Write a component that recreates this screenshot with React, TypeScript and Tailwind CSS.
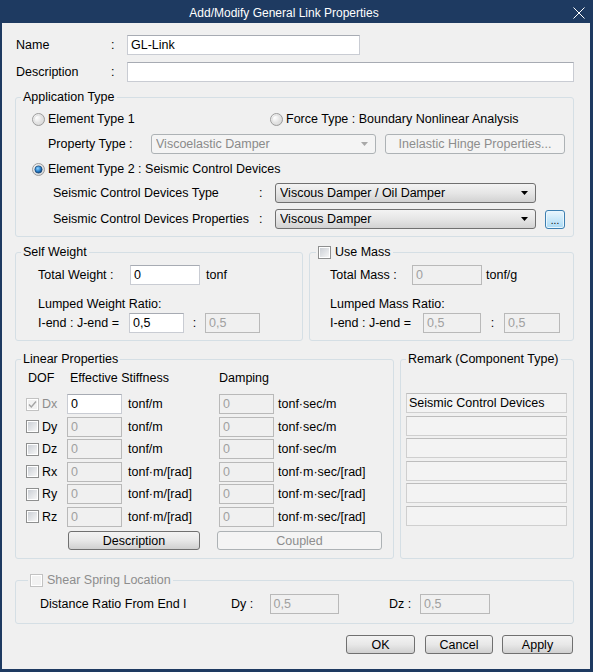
import type { ReactNode } from 'react';

interface BoxProps {
  value?: string;
  disabled?: boolean;
  className?: string;
}

function Box({ value = '', disabled = false, className = '' }: BoxProps) {
  return (
    <div
      className={`h-[20px] shrink-0 border pl-[3px] pt-[1px] leading-[16px] ${
        disabled
          ? 'border-[#b9b9b9] bg-[#f0f0f0] text-[#a0a0a0]'
          : 'border-[#c9ccd3] border-t-[#a7abb3] bg-white text-black'
      } ${className}`}
    >
      {value}
    </div>
  );
}

function Combo({ value, disabled = false, className = '' }: BoxProps) {
  return (
    <div
      className={`h-[20px] shrink-0 rounded-[3px] border flex items-center pl-[4px] pr-[7px] ${
        disabled
          ? 'border-[#adb2b5] bg-[#f4f4f4] text-[#8a8a8a]'
          : 'border-[#707070] bg-linear-to-b from-[#f3f3f3] via-[#e6e6e6] to-[#d2d2d2] text-black'
      } ${className}`}
    >
      <span className="flex-1 truncate">{value}</span>
      <svg width="7" height="4" viewBox="0 0 7 4">
        <path d="M0 0H7L3.5 4Z" fill={disabled ? '#a8a8a8' : '#000'} />
      </svg>
    </div>
  );
}

interface BtnProps {
  label: string;
  disabled?: boolean;
  className?: string;
}

function Btn({ label, disabled = false, className = '' }: BtnProps) {
  return (
    <button
      type="button"
      className={`h-[19px] shrink-0 rounded-[3px] border flex items-center justify-center leading-[16px] ${
        disabled
          ? 'border-[#adb2b5] bg-[#f4f4f4] text-[#8d8d8d]'
          : 'border-[#707070] bg-linear-to-b from-[#f3f3f3] via-[#e8e8e8] to-[#d0d0d0] text-black'
      } ${className}`}
    >
      {label}
    </button>
  );
}

function Radio({ checked = false }: { checked?: boolean }) {
  return (
    <svg width="13" height="13" viewBox="0 0 13 13" className="shrink-0">
      <defs>
        <radialGradient id="rdo-fill" cx="0.35" cy="0.35" r="0.7">
          <stop offset="0" stopColor="#ffffff" />
          <stop offset="1" stopColor="#d2d2d2" />
        </radialGradient>
        <radialGradient id="rdo-dot" cx="0.4" cy="0.35" r="0.65">
          <stop offset="0" stopColor="#8fd3ff" />
          <stop offset="0.6" stopColor="#2b83cf" />
          <stop offset="1" stopColor="#0d3f75" />
        </radialGradient>
      </defs>
      <circle cx="6.5" cy="6.5" r="6" fill="url(#rdo-fill)" stroke="#9c9c9c" />
      <circle cx="6.5" cy="6.5" r="4.3" fill="none" stroke="#e2e2e2" />
      {checked && <circle cx="6.5" cy="6.5" r="3.6" fill="url(#rdo-dot)" stroke="#1b4a7a" strokeWidth="0.8" />}
    </svg>
  );
}

function Check({ checked = false, disabled = false }: { checked?: boolean; disabled?: boolean }) {
  return (
    <svg width="13" height="13" viewBox="0 0 13 13" className="shrink-0">
      <defs>
        <linearGradient id="chk-fill" x1="0" y1="0" x2="1" y2="1">
          <stop offset="0" stopColor="#cbcfd5" />
          <stop offset="1" stopColor="#f6f6f6" />
        </linearGradient>
      </defs>
      <rect x="0.5" y="0.5" width="12" height="12" fill="#fff" stroke={disabled ? '#c2c2c2' : '#8e8f8f'} />
      <rect x="2" y="2" width="9" height="9" fill={disabled ? '#f2f2f2' : 'url(#chk-fill)'} />
      {checked && (
        <path d="M3 6.5L5.3 9L10 3.5" fill="none" stroke={disabled ? '#a4a4a4' : '#333'} strokeWidth="1.4" />
      )}
    </svg>
  );
}

interface GroupProps {
  legend: ReactNode;
  className?: string;
  legendClass?: string;
  children: ReactNode;
}

function Group({ legend, className = '', legendClass = 'ml-[5px]', children }: GroupProps) {
  return (
    <fieldset className={`border border-[#d5dfe5] rounded-[3px] ${className}`}>
      <legend className={`px-[2px] leading-[14px] ${legendClass}`}>{legend}</legend>
      {children}
    </fieldset>
  );
}

const dofRows = [
  { dof: 'Dx', stiff: 'tonf/m', damp: 'tonf·sec/m' },
  { dof: 'Dy', stiff: 'tonf/m', damp: 'tonf·sec/m' },
  { dof: 'Dz', stiff: 'tonf/m', damp: 'tonf·sec/m' },
  { dof: 'Rx', stiff: 'tonf·m/[rad]', damp: 'tonf·m·sec/[rad]' },
  { dof: 'Ry', stiff: 'tonf·m/[rad]', damp: 'tonf·m·sec/[rad]' },
  { dof: 'Rz', stiff: 'tonf·m/[rad]', damp: 'tonf·m·sec/[rad]' },
];

const remarks = ['Seismic Control Devices', '', '', '', '', ''];

export default function App() {
  return (
    <div className="w-[593px] h-[672px] bg-[#1e3a61] flex flex-col font-['Liberation_Sans',Arial,sans-serif] text-[12.5px] leading-[16px] text-black select-none">
      {/* title bar */}
      <div className="h-[23px] shrink-0 flex items-center">
        <div className="flex-1 text-center text-white text-[12px] pt-[2px]">Add/Modify General Link Properties</div>
        <div className="w-[25px] pl-[5px] pt-[2px]">
          <svg width="12" height="12" viewBox="0 0 12 12">
            <path d="M0.5 0.5L11.5 11.5M11.5 0.5L0.5 11.5" stroke="#fff" strokeWidth="1" />
          </svg>
        </div>
      </div>

      <div className="flex-1 ml-[2px] mr-[3px] mb-[3px] bg-[#f0f0f0] pl-[13px] pr-[16px] pt-[12px] flex flex-col">
        <div className="flex items-center h-[20px]">
          <span className="w-[96px] pl-[1px]">Name</span>
          <span className="w-[16px]">:</span>
          <Box value="GL-Link" className="w-[233px]" />
        </div>
        <div className="flex items-center h-[20px] mt-[7px]">
          <span className="w-[96px] pl-[1px]">Description</span>
          <span className="w-[16px]">:</span>
          <Box className="flex-1" />
        </div>

        {/* application type */}
        <Group legend="Application Type" className="mt-[8px]">
          <div className="pl-[16px] pt-[5px] pb-[7px] flex flex-col">
            <div className="flex items-center h-[20px]">
              <div className="w-[238px] flex items-center gap-[3px]">
                <Radio />
                <span>Element Type 1</span>
              </div>
              <div className="flex items-center gap-[3px]">
                <Radio />
                <span>Force Type : Boundary Nonlinear Analysis</span>
              </div>
            </div>
            <div className="flex items-center mt-[5px]">
              <span className="ml-[16px] w-[103px]">Property Type :</span>
              <Combo value="Viscoelastic Damper" disabled className="w-[225px]" />
              <Btn label="Inelastic Hinge Properties..." disabled className="ml-[9px] w-[180px] h-[20px]" />
            </div>
            <div className="flex items-center gap-[3px] h-[20px] mt-[5px]">
              <Radio checked />
              <span>Element Type 2 : Seismic Control Devices</span>
            </div>
            <div className="flex items-center mt-[4px]">
              <span className="ml-[21px] w-[206px]">Seismic Control Devices Type</span>
              <span className="w-[16px]">:</span>
              <Combo value="Viscous Damper / Oil Damper" className="w-[261px]" />
            </div>
            <div className="flex items-center mt-[6px]">
              <span className="ml-[21px] w-[206px]">Seismic Control Devices Properties</span>
              <span className="w-[16px]">:</span>
              <Combo value="Viscous Damper" className="w-[261px]" />
              <button
                type="button"
                className="ml-[9px] w-[20px] h-[19px] rounded-[3px] border border-[#3c7fb1] bg-linear-to-b from-[#eaf6fd] to-[#a9daf5] shadow-[inset_0_0_0_1px_#e9f6fd] text-[10px] leading-[10px] pt-[4px] text-black"
              >
                ...
              </button>
            </div>
          </div>
        </Group>

        {/* weight / mass */}
        <div className="flex gap-[6px] mt-[8px]">
          <Group legend="Self Weight" className="w-[288px]">
            <div className="pl-[22px] pt-[6px] pb-[7px]">
              <div className="flex items-center h-[20px]">
                <span className="w-[92px]">Total Weight :</span>
                <Box value="0" className="w-[70px]" />
                <span className="ml-[6px]">tonf</span>
              </div>
              <div className="mt-[11px] h-[16px]">Lumped Weight Ratio:</div>
              <div className="flex items-center mt-[1px]">
                <span className="w-[91px]">I-end : J-end =</span>
                <Box value="0,5" className="w-[55px]" />
                <span className="w-[21px] text-center">:</span>
                <Box value="0,5" disabled className="w-[55px]" />
              </div>
            </div>
          </Group>
          <Group
            legend={
              <span className="flex items-center gap-[4px]">
                <Check />
                <span>Use Mass</span>
              </span>
            }
            className="flex-1"
            legendClass="ml-[6px]"
          >
            <div className="pl-[20px] pt-[6px] pb-[7px]">
              <div className="flex items-center h-[20px]">
                <span className="w-[82px]">Total Mass :</span>
                <Box value="0" disabled className="w-[70px]" />
                <span className="ml-[4px]">tonf/g</span>
              </div>
              <div className="mt-[11px] h-[16px]">Lumped Mass Ratio:</div>
              <div className="flex items-center mt-[1px]">
                <span className="w-[93px]">I-end : J-end =</span>
                <Box value="0,5" disabled className="w-[58px]" />
                <span className="w-[23px] text-center">:</span>
                <Box value="0,5" disabled className="w-[56px]" />
              </div>
            </div>
          </Group>
        </div>

        {/* linear properties / remark */}
        <div className="flex gap-[6px] mt-[11px] items-stretch">
          <Group legend="Linear Properties" className="w-[379px]">
            <div className="pl-[10px] pt-[4px] pb-[8px]">
              <div className="flex h-[16px]">
                <span className="w-[44px] pl-[2px]">DOF</span>
                <span className="w-[149px]">Effective Stiffness</span>
                <span>Damping</span>
              </div>
              <div className="mt-[8px] flex flex-col gap-[2.5px]">
                {dofRows.map((r, i) => (
                  <div key={r.dof} className="flex items-center h-[20px]">
                    <Check checked={i === 0} disabled={i === 0} />
                    <span className={`ml-[3px] w-[25px] ${i === 0 ? 'text-[#8d8d8d]' : ''}`}>{r.dof}</span>
                    <Box value="0" disabled={i !== 0} className="w-[55px]" />
                    <span className="ml-[6px] w-[91px]">{r.stiff}</span>
                    <Box value="0" disabled className="w-[55px]" />
                    <span className="ml-[4px]">{r.damp}</span>
                  </div>
                ))}
              </div>
              <div className="flex mt-[4.5px]">
                <Btn label="Description" className="ml-[42px] w-[132px]" />
                <Btn label="Coupled" disabled className="ml-[17px] w-[165px]" />
              </div>
            </div>
          </Group>
          <Group legend="Remark (Component Type)" className="flex-1">
            <div className="pl-[5px] pr-[6px] pt-[27px] flex flex-col gap-[2.5px]">
              {remarks.map((t, i) => (
                <div
                  key={i}
                  className="h-[20px] border border-[#cfcfcf] border-t-[#bdbdbd] bg-[#f3f3f3] pl-[2px] pt-[1px] leading-[16px]"
                >
                  {t}
                </div>
              ))}
            </div>
          </Group>
        </div>

        {/* shear spring */}
        <Group
          legend={
            <span className="flex items-center gap-[4px] text-[#8d8d8d]">
              <Check disabled />
              <span>Shear Spring Location</span>
            </span>
          }
          className="mt-[14px]"
          legendClass="ml-[12px]"
        >
          <div className="flex items-center pl-[24px] pt-[7px] pb-[9px]">
            <span className="w-[191px]">Distance Ratio From End I</span>
            <span className="w-[38.5px]">Dy :</span>
            <Box value="0,5" disabled className="w-[69px]" />
            <span className="ml-[50.5px] w-[31px]">Dz :</span>
            <Box value="0,5" disabled className="w-[70px]" />
          </div>
        </Group>

        <div className="flex justify-end mt-[11px] pr-[1px]">
          <Btn label="OK" className="w-[69px]" />
          <Btn label="Cancel" className="ml-[10px] w-[68px]" />
          <Btn label="Apply" className="ml-[9px] w-[71px]" />
        </div>
      </div>
    </div>
  );
}
